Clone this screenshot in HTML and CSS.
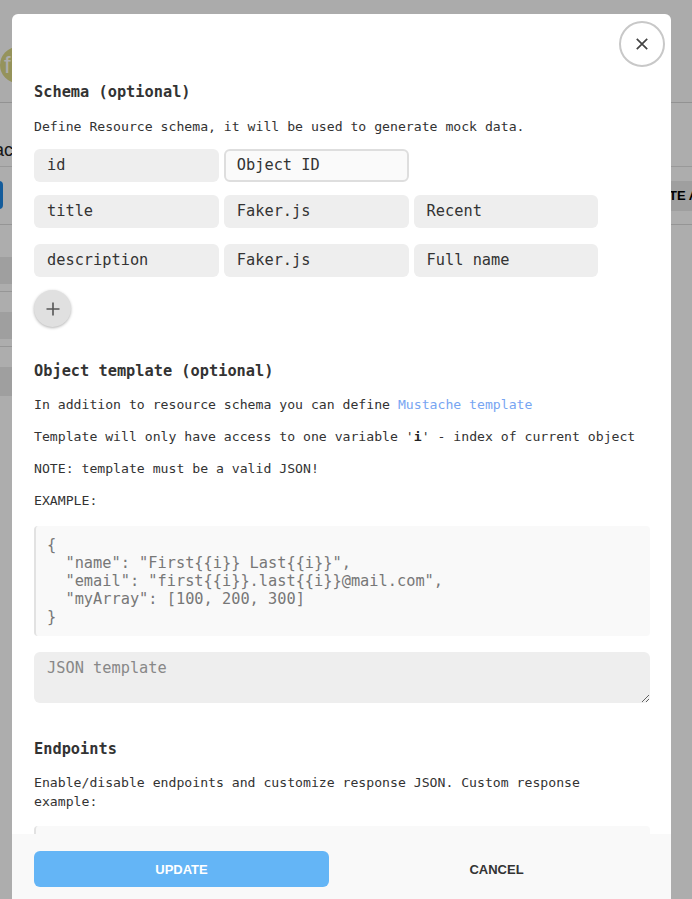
FILE: index.html
```html
<!DOCTYPE html>
<html>
<head>
<meta charset="utf-8">
<link rel="stylesheet" href="styles.css">
</head>
<body>
<div class="page">
  <div class="topbar">
    <div class="avatar">f</div>
  </div>
  <div class="sub">
    <span class="sub-text">ac</span>
  </div>
  <div class="toolbar">
    <span class="blue-btn"></span>
    <span class="gray-btn">CREATE ALL</span>
  </div>
  <div class="list">
    <div class="item"><div class="band"></div></div>
    <div class="item"><div class="band"></div></div>
    <div class="item last"><div class="band"></div></div>
  </div>
</div>

<div class="overlay">
  <div class="modal">
    <button class="close" aria-label="Close">
      <svg width="16" height="16" viewBox="0 0 16 16"><path d="M2.8 2.8 L13.2 13.2 M13.2 2.8 L2.8 13.2" stroke="#444" stroke-width="1.7" fill="none"/></svg>
    </button>
    <div class="content">
      <h3 class="h">Schema (optional)</h3>
      <p class="p first">Define Resource schema, it will be used to generate mock data.</p>
      <div class="fields f1">
        <div class="field">id</div>
        <div class="field outlined">Object ID</div>
      </div>
      <div class="fields f2">
        <div class="field">title</div>
        <div class="field">Faker.js</div>
        <div class="field">Recent</div>
      </div>
      <div class="fields f3">
        <div class="field">description</div>
        <div class="field">Faker.js</div>
        <div class="field">Full name</div>
      </div>
      <button class="add" aria-label="Add">
        <svg width="16" height="16" viewBox="0 0 16 16"><path d="M8 1.5 V14.5 M1.5 8 H14.5" stroke="#555" stroke-width="1.6" fill="none"/></svg>
      </button>

      <h3 class="h h2">Object template (optional)</h3>
      <p class="p first tight">In addition to resource schema you can define <a class="link">Mustache template</a></p>
      <p class="p">Template will only have access to one variable '<b>i</b>' - index of current object</p>
      <p class="p">NOTE: template must be a valid JSON!</p>
      <p class="p">EXAMPLE:</p>
      <pre class="code ex">{
  "name": "First{{i}} Last{{i}}",
  "email": "first{{i}}.last{{i}}@mail.com",
  "myArray": [100, 200, 300]
}</pre>
      <textarea class="ta" placeholder="JSON template"></textarea>

      <h3 class="h h3">Endpoints</h3>
      <p class="p first tight">Enable/disable endpoints and customize response JSON. Custom response example:</p>
      <div class="code resp"></div>
    </div>
    <div class="footer">
      <button class="btn update">UPDATE</button>
      <button class="btn cancel">CANCEL</button>
    </div>
  </div>
</div>
</body>
</html>
```

FILE: styles.css
```css
html, body {
  margin: 0;
  padding: 0;
  height: 100%;
  overflow: hidden;
}
body {
  background: #ffffff;
  font-family: "DejaVu Sans Mono", monospace;
}

/* background page */
.page {
  width: 692px;
}
.topbar {
  height: 103px;
  border-bottom: 1px solid #d8d8d8;
  background: #fdfdfd;
  padding-top: 47px;
  box-sizing: border-box;
}
.avatar {
  width: 36px;
  height: 36px;
  border-radius: 50%;
  background: #dcd986;
  color: #fff;
  font-family: "Liberation Sans", Arial, sans-serif;
  font-size: 24px;
  line-height: 35px;
  padding-left: 4px;
  box-sizing: border-box;
}
.sub {
  height: 64px;
  border-bottom: 1px solid #e2e2e2;
  font-family: "Liberation Sans", Arial, sans-serif;
  font-size: 18px;
  color: #222;
  padding-top: 37px;
  box-sizing: border-box;
  margin-left: -6px;
}
.toolbar {
  height: 58px;
  border-bottom: 1px solid #dcdcdc;
  display: flex;
  justify-content: space-between;
  align-items: flex-start;
  padding-top: 14px;
  box-sizing: border-box;
}
.blue-btn {
  width: 20px;
  height: 28px;
  margin-left: -17px;
  border-radius: 4px;
  background: #1e88e5;
}
.gray-btn {
  height: 30px;
  padding: 0 10px 0 12px;
  margin-right: -32px;
  background: #eaeaea;
  color: #000;
  font-family: "Liberation Sans", Arial, sans-serif;
  font-weight: bold;
  font-size: 13px;
  line-height: 30px;
}
.list {
  margin-top: 12px;
  width: 320px;
}
.item {
  height: 55px;
  box-sizing: border-box;
  padding-top: 20px;
  border-bottom: 1px solid #dedede;
}
.item.last {
  border-bottom: none;
}
.band {
  height: 27px;
  background: #ebebeb;
}
.item.last .band {
  height: 29px;
}

/* overlay + modal */
.overlay {
  position: fixed;
  inset: 0;
  background: rgba(0, 0, 0, 0.32);
}
.modal {
  position: absolute;
  left: 12px;
  top: 14px;
  width: 659px;
  bottom: 0;
  background: #ffffff;
  border-radius: 6px 6px 0 0;
  display: flex;
  flex-direction: column;
  overflow: hidden;
}
.close {
  position: absolute;
  top: 7px;
  right: 6px;
  width: 46px;
  height: 46px;
  border-radius: 50%;
  border: 2px solid #c8c8c8;
  background: #fff;
  display: flex;
  align-items: center;
  justify-content: center;
  padding: 0;
  box-sizing: border-box;
}
.content {
  flex: 1;
  min-height: 0;
  overflow: hidden;
  padding: 69px 21px 0 22px;
  color: #333;
}
.h {
  margin: 0;
  font-size: 15.3px;
  line-height: 18px;
  font-weight: bold;
  color: #333;
}
.h2 { margin-top: 35px; }
.h3 { margin-top: 37px; }
.p {
  margin: 13px 0 0;
  max-width: 604px;
  font-size: 13.15px;
  line-height: 19px;
  color: #333;
}
.p.first { margin-top: 16px; }
.p.first.tight { margin-top: 15px; }
.p b { font-weight: bold; color: #222; }
.link { color: #77a5f2; }

.fields {
  display: flex;
  gap: 5px;
  margin-top: 13px;
}
.f2 { margin-top: 13px; }
.f3 { margin-top: 16px; }
.field {
  width: 30%;
  height: 33px;
  box-sizing: border-box;
  border-radius: 6px;
  background: #eeeeee;
  padding: 0 13px;
  font-size: 15.3px;
  line-height: 33px;
  color: #333;
}
.field.outlined {
  background: #fafafa;
  border: 2px solid #dedede;
  padding: 0 11px;
  line-height: 29px;
}
.add {
  margin-top: 13px;
  width: 37px;
  height: 37px;
  border-radius: 50%;
  border: none;
  background: #e0e0e0;
  box-shadow: 0 1px 3px rgba(0, 0, 0, 0.3);
  display: flex;
  align-items: center;
  justify-content: center;
  padding: 0;
}
.code {
  margin: 17px 0 0;
  background: #f9f9f9;
  border-left: 2px solid #e2e2e2;
  border-radius: 4px;
  padding: 10px 11px;
  font-family: "DejaVu Sans Mono", monospace;
  font-size: 15.3px;
  line-height: 18px;
  color: #777;
}
.code.ex { margin-top: 16px; }
.code.resp {
  margin-top: 15px;
  height: 110px;
  box-sizing: border-box;
}
.ta {
  display: block;
  margin-top: 16px;
  width: 100%;
  height: 51px;
  box-sizing: border-box;
  background: #eeeeee;
  border: none;
  border-radius: 6px;
  padding: 7px 13px;
  font-family: "DejaVu Sans Mono", monospace;
  font-size: 15.3px;
  line-height: 18px;
  color: #333;
  resize: vertical;
  outline: none;
}
.ta::placeholder { color: #888; }

.footer {
  flex: none;
  height: 65px;
  background: #f9f9f9;
  display: grid;
  grid-template-columns: 295px 295px;
  column-gap: 19px;
  padding: 17px 0 0 22px;
  box-sizing: border-box;
}
.btn {
  height: 36px;
  border: none;
  border-radius: 6px;
  font-family: "Liberation Sans", Arial, sans-serif;
  font-weight: bold;
  font-size: 13px;
  padding: 0;
}
.update {
  background: #64b5f6;
  color: #ffffff;
}
.cancel {
  background: transparent;
  color: #333;
  padding-left: 2px;
}
```
